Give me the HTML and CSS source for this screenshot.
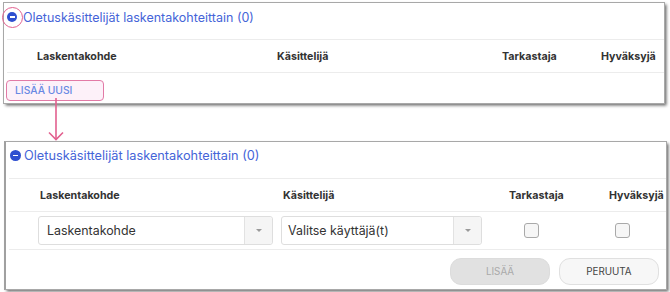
FILE: index.html
```html
<!DOCTYPE html>
<html lang="fi">
<head>
<meta charset="utf-8">
<title>Oletuskäsittelijät</title>
<link rel="stylesheet" href="styles.css">
</head>
<body>
<div class="page">
  <section class="panel panel-top">
    <div class="phead">
      <span class="toggle"></span>
      <span class="ptitle">Oletuskäsittelijät laskentakohteittain (0)</span>
    </div>
    <div class="hr"></div>
    <div class="thead thead-top">
      <div class="th">Laskentakohde</div>
      <div class="th">Käsittelijä</div>
      <div class="th">Tarkastaja</div>
      <div class="th">Hyväksyjä</div>
    </div>
    <div class="hr"></div>
    <div class="add-row">
      <button class="add-new">LISÄÄ UUSI</button>
    </div>
  </section>

  <section class="panel panel-bottom">
    <div class="phead phead-b">
      <span class="toggle toggle-b"></span>
      <span class="ptitle ptitle-b">Oletuskäsittelijät laskentakohteittain (0)</span>
    </div>
    <div class="hr hr-b"></div>
    <div class="thead thead-b">
      <div class="th">Laskentakohde</div>
      <div class="th">Käsittelijä</div>
      <div class="th">Tarkastaja</div>
      <div class="th">Hyväksyjä</div>
    </div>
    <div class="hr hr-b"></div>
    <div class="trow">
      <div class="select sel1"><span class="sel-text">Laskentakohde</span><span class="sel-btn"><span class="caret"></span></span></div>
      <div class="select sel2"><span class="sel-text">Valitse käyttäjä(t)</span><span class="sel-btn"><span class="caret"></span></span></div>
      <div class="cbcell cb1"><span class="cb"></span></div>
      <div class="cbcell cb2"><span class="cb"></span></div>
    </div>
    <div class="hr hr-b"></div>
    <div class="actions">
      <button class="btn btn-disabled">LISÄÄ</button>
      <button class="btn btn-cancel">PERUUTA</button>
    </div>
  </section>

  <span class="ring"></span>
  <svg class="arrow" width="16" height="44" viewBox="0 0 16 44">
    <path d="M8 0 V41.5" fill="none" stroke="#e2608f" stroke-width="1.6"/>
    <path d="M1 34.5 L8 41.5 L15 34.5" fill="none" stroke="#e2608f" stroke-width="1.6"/>
  </svg>
</div>
</body>
</html>
```

FILE: styles.css
```css
* { box-sizing: border-box; }
html, body { margin: 0; padding: 0; background: #fff; }
body { font-family: Inter, "Noto Sans", "DejaVu Sans", sans-serif; }

.page { position: relative; width: 670px; height: 292px; overflow: hidden; padding-top: 2px; }

.panel {
  background: #fff;
  border: 1px solid #a8a8a8;
  box-shadow: 1.5px 1.5px 3px rgba(0,0,0,0.6);
}
.panel-top { margin-left: 3px; width: 662px; height: 102px; }
.panel-bottom { margin-left: 4px; margin-top: 37px; width: 663px; height: 149px; border-left: 2px solid #a0a0a0; }

.phead { height: 36px; display: flex; align-items: center; padding: 0 0 8px 3px; gap: 6px; }
.phead-b { height: 36px; padding: 0 0 9px 4px; gap: 3px; }

.toggle {
  width: 10px; height: 10px; border-radius: 50%;
  background: #2e4fd0; position: relative; flex: none;
}
.toggle::after {
  content: ""; position: absolute; left: 2.5px; top: 4.2px; width: 5px; height: 1.6px; background: #fff;
}
.toggle-b { width: 11px; height: 11px; }
.toggle-b::after { left: 3px; top: 4.7px; }

.ptitle { color: #4564d8; font-size: 12.5px; letter-spacing: 0; white-space: nowrap; }
.ptitle-b { font-size: 12.75px; }

.hr { height: 1px; background: #ececec; margin-left: 3px; }
.hr-b { margin-left: 3px; }

.thead { display: grid; height: 32px; align-items: center; }
.thead-top { padding-left: 31px; grid-template-columns: 240px 225px 99px 1fr; }
.thead-b { padding-left: 32px; grid-template-columns: 243px 226px 100px 1fr; }
.th { padding-left: 2px; font-size: 10.7px; font-weight: 700; color: #333; white-space: nowrap; }

.add-row { padding: 5px 0 0 2px; }
.add-new {
  width: 98px; height: 21px; padding: 0 0 0 8px; text-align: left;
  background: #fdf1f9; border: 1.5px solid #e27aa6; border-radius: 4px;
  color: #6889e4; font-family: inherit; font-size: 10.3px; font-weight: 500;
}

.trow {
  display: grid; height: 37px; padding-left: 32px; align-items: center;
  grid-template-columns: 243px 226px 100px 1fr;
}
.select {
  height: 29px; border: 1px solid #dedede; border-radius: 3px; display: flex; align-items: stretch; background: #fff;
}
.sel1 { width: 235px; }
.sel2 { width: 201px; margin-left: 0; }
.sel-text { flex: 1; display: flex; align-items: center; font-size: 12.4px; color: #333; white-space: nowrap; }
.sel1 .sel-text { padding-left: 8px; }
.sel2 .sel-text { padding-left: 6px; }
.sel-btn {
  width: 28px; background: #f5f5f5; border-left: 1px solid #e2e2e2; border-radius: 0 3px 3px 0;
  display: flex; align-items: center; justify-content: center;
}
.caret {
  width: 0; height: 0; border-left: 3px solid transparent; border-right: 3px solid transparent; border-top: 3.5px solid #9a9a9a;
}
.cbcell { display: flex; }
.cb1 { padding-left: 17px; }
.cb2 { padding-left: 8px; }
.cb { width: 15px; height: 15px; border: 1px solid #a9a9a9; border-radius: 3px; background: #f6f6f6; }

.actions { display: flex; justify-content: flex-end; gap: 9px; padding: 8px 7px 0 0; }
.btn {
  width: 100px; height: 27px; border-radius: 11px; font-family: inherit; font-size: 9.8px; padding: 0;
}
.btn-disabled { background: #e1e1e1; border: 1px solid #dcdcdc; color: #a9a9a9; }
.btn-cancel { background: #f7f7f7; border: 1px solid #e0e0e0; color: #444; }

.ring {
  position: absolute; left: 2px; top: 7px; width: 21px; height: 21px;
  border: 1.6px solid #e2608f; border-radius: 50%;
}
.arrow { position: absolute; left: 48px; top: 98px; }
```
